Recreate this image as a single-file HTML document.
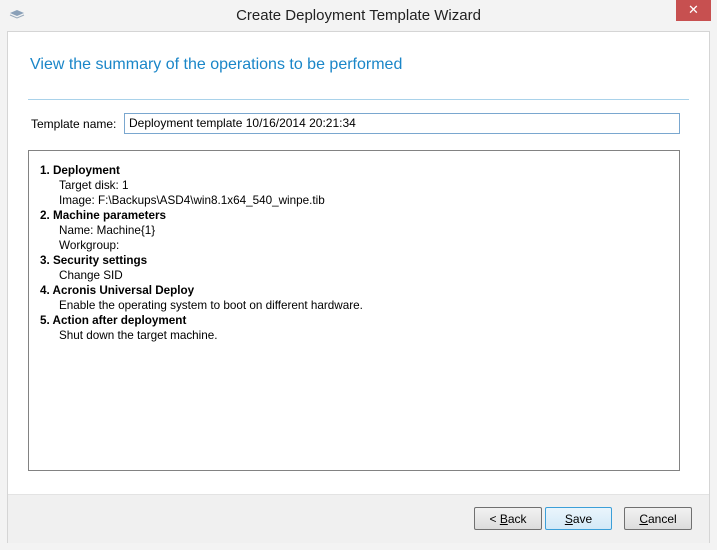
<!DOCTYPE html>
<html><head><style>
body{margin:0;width:717px;height:550px;background:#f3f3f3;font-family:"Liberation Sans",sans-serif;position:relative;overflow:hidden}
.a{position:absolute}
.title{left:0;top:0;width:717px;text-align:center;top:7px;font-size:15px;color:#222}
.close{left:676px;top:0;width:35px;height:21px;background:#c75050;color:#fff;font-size:13px;text-align:center;line-height:20px}
.panel{left:7px;top:31px;width:701px;height:510px;background:#fff;border:1px solid #d5d5d5}
.footer{left:8px;top:494px;width:701px;height:48px;background:#f0f0f0;border-top:1px solid #e3e3e3}
.h{left:30px;top:56px;font-size:16px;color:#1a86c8}
.hr{left:28px;top:99px;width:661px;height:1px;background:#a9d2ea}
.lbl{left:31px;top:117px;font-size:12px;color:#000}
.inp{left:124px;top:113px;border:1px solid #7aa7cf;font-size:12px;line-height:19px;padding-left:4px;box-sizing:border-box;width:556px;height:21px}
.box{left:28px;top:150px;width:652px;height:321px;border:1px solid #828282;box-sizing:border-box;font-size:11.7px;line-height:15px;padding:12px 0 0 11px;color:#000}
.box b{display:block}
.box div{padding-left:19px}
.btn{top:507px;height:23px;border:1px solid #707070;border-radius:2px;background:linear-gradient(#f2f2f2,#dcdcdc);font-size:12px;text-align:center;line-height:22px;box-sizing:border-box}
</style></head><body>
<svg class="a" style="left:9px;top:10px" width="16" height="10"><path d="M1 3 L8 0 L15 3 L8 6Z" fill="#8aa0b8"/><path d="M1 5 L8 8 L15 5" stroke="#9ab" fill="none"/></svg>
<div class="a title">Create Deployment Template Wizard</div>
<div class="a close">✕</div>
<div class="a panel"></div>
<div class="a footer"></div>
<div class="a h">View the summary of the operations to be performed</div>
<div class="a hr"></div>
<div class="a lbl">Template name:</div>
<div class="a inp">Deployment template 10/16/2014 20:21:34</div>
<div class="a box">
<b>1. Deployment</b><div>Target disk: 1</div><div>Image: F:\Backups\ASD4\win8.1x64_540_winpe.tib</div>
<b>2. Machine parameters</b><div>Name: Machine{1}</div><div>Workgroup:</div>
<b>3. Security settings</b><div>Change SID</div>
<b>4. Acronis Universal Deploy</b><div>Enable the operating system to boot on different hardware.</div>
<b>5. Action after deployment</b><div>Shut down the target machine.</div>
</div>
<div class="a btn" style="left:474px;width:68px">&lt; <u>B</u>ack</div>
<div class="a btn" style="left:545px;width:67px;border-color:#3c9fd8;background:linear-gradient(#eaf5fc,#d3e9f7)"><u>S</u>ave</div>
<div class="a btn" style="left:624px;width:68px"><u>C</u>ancel</div>
</body></html>
